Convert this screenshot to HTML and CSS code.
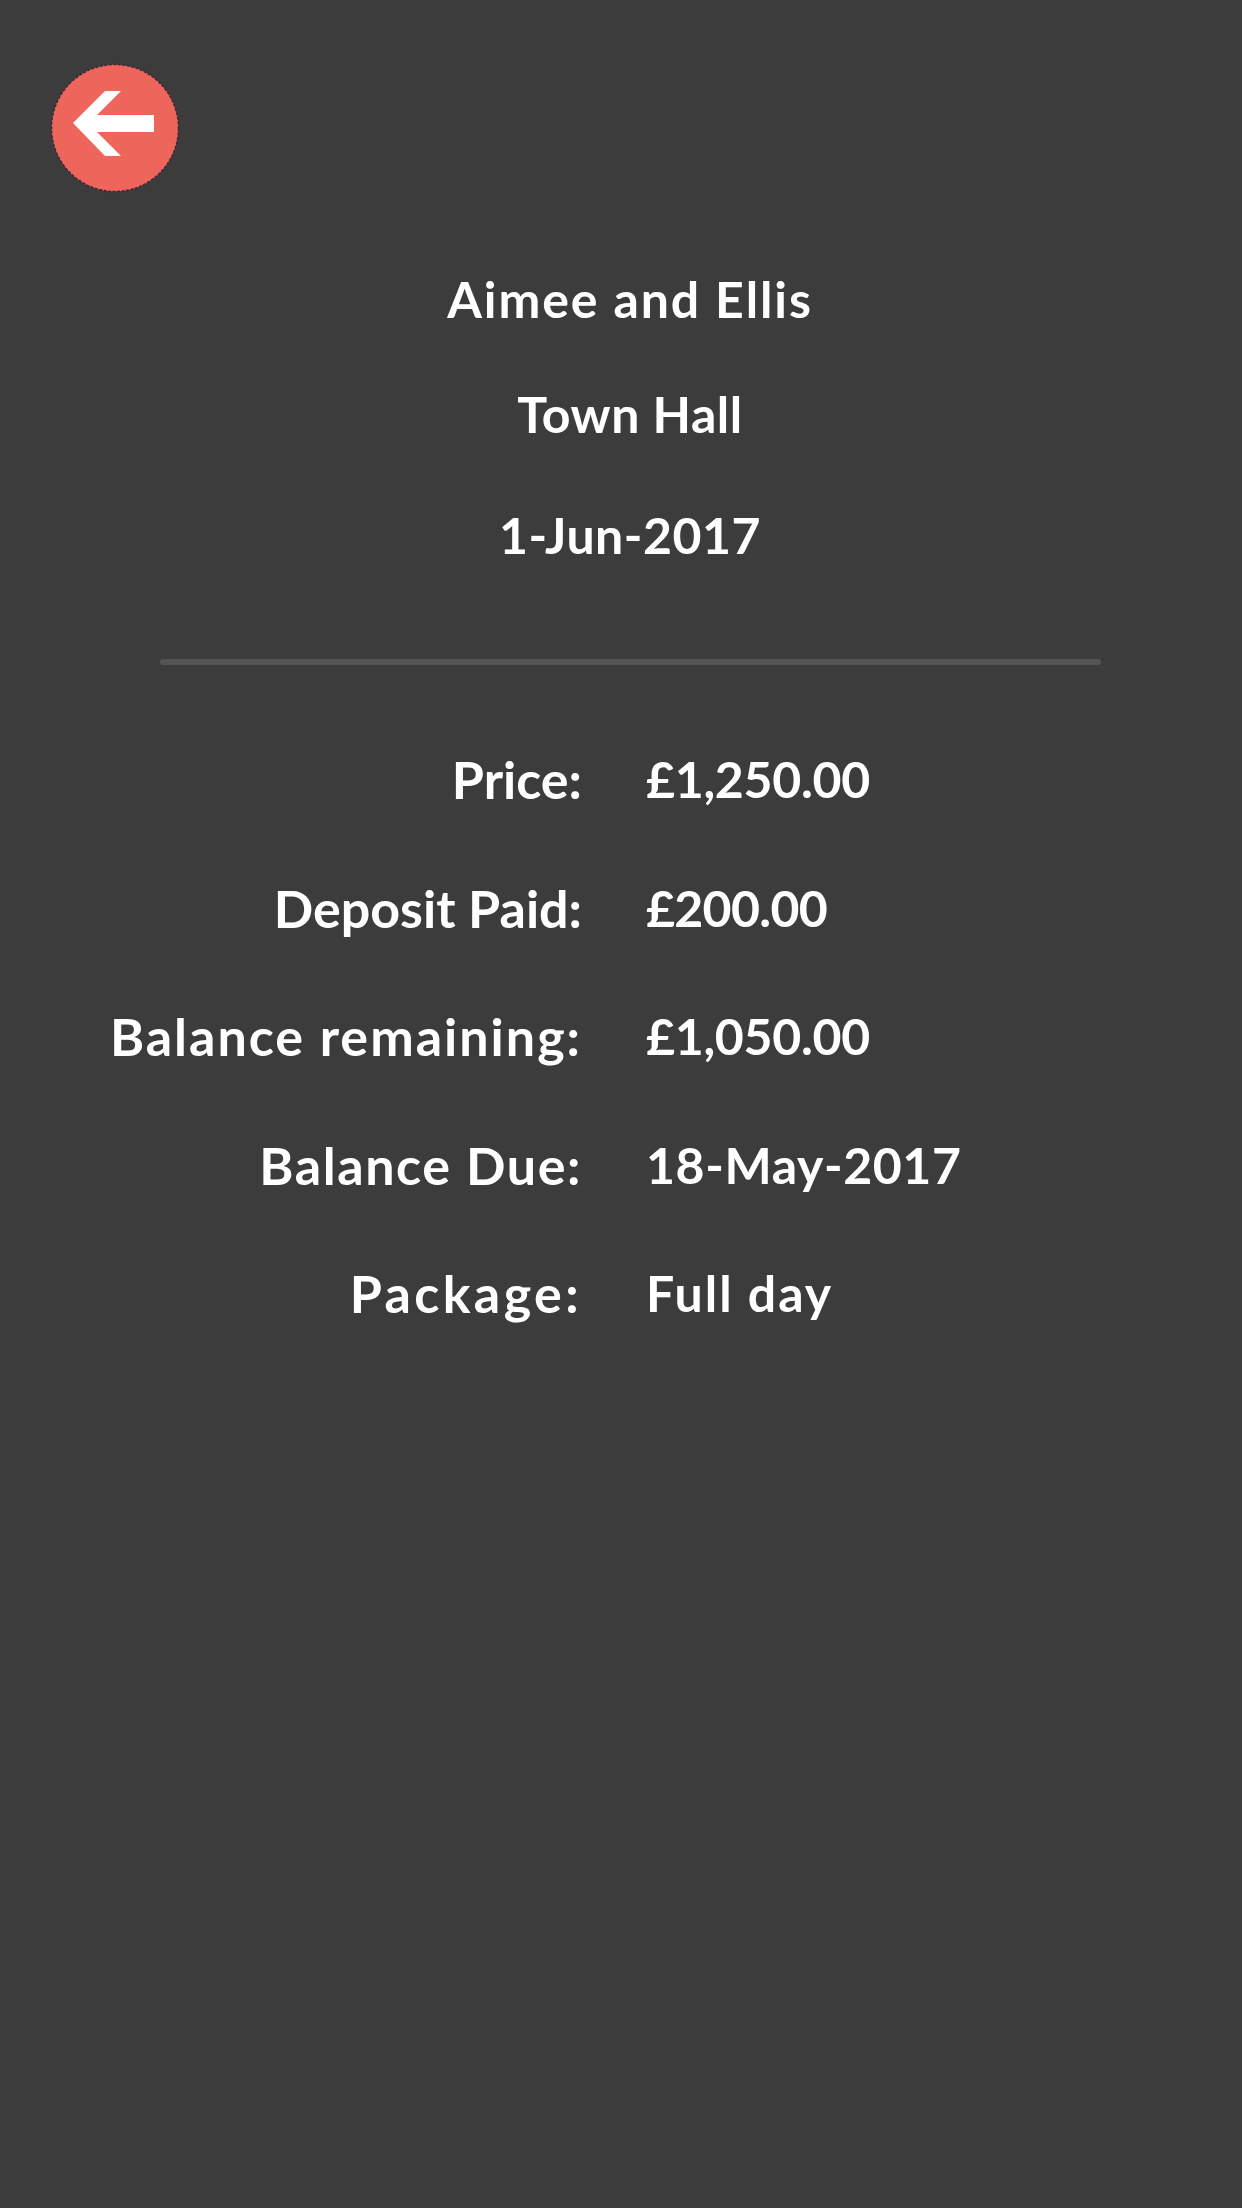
FILE: index.html
```html
<!DOCTYPE html>
<html lang="en">
<head>
    <meta charset="UTF-8">
    <meta name="viewport" content="width=device-width, initial-scale=1.0">
    <title>Booking details</title>
    <link rel="stylesheet" href="styles.css">
</head>
<body>
    <div class="booking">
        <header class="top-bar">
            <button class="back-btn" type="button" aria-label="Back">
                <svg viewBox="0 0 130 130" width="130" height="130">
                    <circle cx="65" cy="65" r="63.5" fill="#ee655b" stroke="#3f2836" stroke-width="1.5" stroke-dasharray="3 1.5"/>
                    <path d="M23 60 L55 28 L71 28 L47 52 L104 52 L104 69 L47 69 L71 93 L55 93 Z" fill="#fff"/>
                </svg>
            </button>
        </header>
        <section class="event">
            <div class="event-line wide">Aimee and Ellis</div>
            <div class="event-line town">Town Hall</div>
            <div class="event-line">1-Jun-2017</div>
        </section>
        <hr class="divider">
        <section class="details">
            <div class="detail-name">Price:</div>
            <div class="detail-value">£1,250.00</div>
            <div class="detail-name">Deposit Paid:</div>
            <div class="detail-value short">£200.00</div>
            <div class="detail-name spaced">Balance remaining:</div>
            <div class="detail-value">£1,050.00</div>
            <div class="detail-name due">Balance Due:</div>
            <div class="detail-value date">18-May-2017</div>
            <div class="detail-name package">Package:</div>
            <div class="detail-value full">Full day</div>
        </section>
    </div>
</body>
</html>
```
FILE: styles.css
```css
body {
    margin: 0;
    background: #3c3c3c;
    color: #fff;
    font-family: "Lato", "Open Sans", sans-serif;
    font-weight: 700;
}
.booking {
    height: 2208px;
    overflow: hidden;
}
.top-bar {
    padding: 63px 0 0 50px;
    height: 129px;
}
.back-btn {
    display: block;
    width: 130px;
    height: 130px;
    padding: 0;
    border: none;
    background: none;
}
.event {
    padding-top: 48px;
    text-align: center;
    font-size: 50px;
    letter-spacing: 0.5px;
}
.event-line {
    height: 118px;
    line-height: 118px;
    padding-left: 18px;
}
.event-line.wide {
    letter-spacing: 1.9px;
}
.event-line.town {
    margin: -3px 0 3px;
}
.divider {
    width: 941px;
    height: 6px;
    margin: 65px 0 0 160px;
    border: none;
    border-radius: 3px;
    background: #555;
}
.details {
    display: grid;
    grid-template-columns: 582px 1fr;
    grid-auto-rows: 128.6px;
    column-gap: 64px;
    padding-top: 50px;
    line-height: 128px;
}
.detail-name {
    text-align: right;
    font-size: 52px;
}
.detail-name.spaced {
    letter-spacing: 2px;
}
.detail-name.due {
    letter-spacing: 1.6px;
}
.detail-name.package {
    letter-spacing: 3.4px;
}
.detail-value {
    font-size: 50px;
    letter-spacing: -0.3px;
}
.detail-value.short {
    letter-spacing: -0.7px;
}
.detail-value.date {
    letter-spacing: 0.6px;
}
.detail-value.full {
    letter-spacing: 2px;
}
```
